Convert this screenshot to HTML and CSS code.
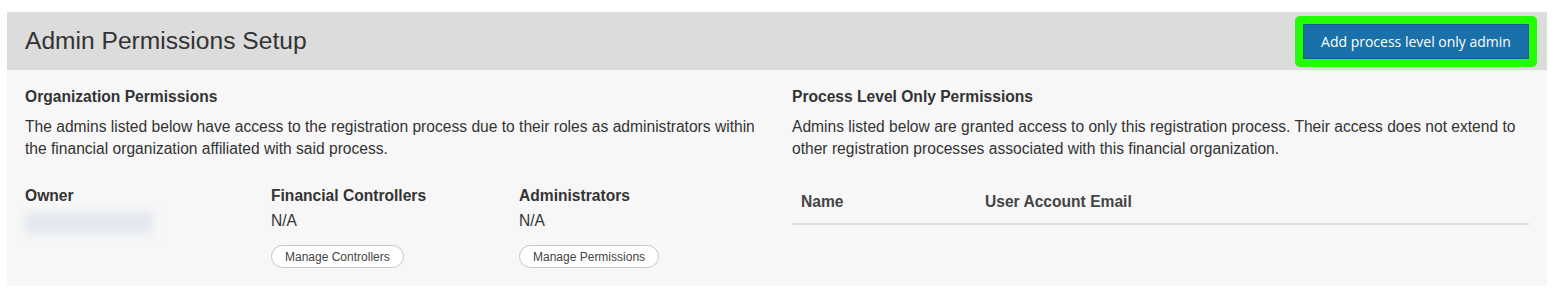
FILE: index.html
```html
<!DOCTYPE html>
<html lang="en">

<head>
    <meta charset="UTF-8">
    <title>Admin Permissions Setup</title>
    <link rel="stylesheet" href="styles.css">
</head>

<body>
    <div class="panel">
        <div class="panel-head">
            <h1>Admin Permissions Setup</h1>
            <div class="focus-ring">
                <button class="btn-primary" type="button">Add process level only admin</button>
            </div>
        </div>
        <div class="panel-body">
            <div class="section">
                <h2>Organization Permissions</h2>
                <p>The admins listed below have access to the registration process due to their roles as administrators within the financial organization affiliated with said process.</p>
                <div class="roles">
                    <div>
                        <h3>Owner</h3>
                        <div class="blurred"></div>
                    </div>
                    <div>
                        <h3>Financial Controllers</h3>
                        <div class="value">N/A</div>
                        <button class="btn-pill" type="button">Manage Controllers</button>
                    </div>
                    <div>
                        <h3>Administrators</h3>
                        <div class="value">N/A</div>
                        <button class="btn-pill" type="button">Manage Permissions</button>
                    </div>
                </div>
            </div>
            <div class="section">
                <h2>Process Level Only Permissions</h2>
                <p>Admins listed below are granted access to only this registration process. Their access does not extend to other registration processes associated with this financial organization.</p>
                <table class="admins">
                    <thead>
                        <tr>
                            <th class="col-name">Name</th>
                            <th>User Account Email</th>
                        </tr>
                    </thead>
                </table>
            </div>
        </div>
    </div>
</body>

</html>
```

FILE: styles.css
```css
* {
    box-sizing: border-box;
}

body {
    margin: 0;
    padding: 12px 7px 8px 7px;
    background-color: #fff;
    font-family: "Liberation Sans", Arial, sans-serif;
    color: #333;
}

.panel {
    background-color: #f7f7f7;
}

.panel-head {
    display: flex;
    align-items: center;
    justify-content: space-between;
    height: 58px;
    padding: 0 10px 0 18px;
    background-color: #dcdcdc;
}

h1 {
    margin: 0;
    font-size: 24.6px;
    font-weight: normal;
    color: #333;
}

.focus-ring {
    padding: 8px;
    border-radius: 5px;
    background-color: #22ff00;
}

.btn-primary {
    display: block;
    height: 35px;
    width: 226px;
    border: 1px solid #155d8c;
    background-color: #1a70a8;
    color: #fff;
    font-family: "Open Sans", sans-serif;
    font-size: 14px;
    cursor: pointer;
}

.panel-body {
    display: grid;
    grid-template-columns: 1fr 1fr;
    gap: 30px;
    padding: 16px 18px 18px 18px;
}

h2 {
    margin: 0 0 8px 0;
    font-size: 15.6px;
    line-height: 22px;
    font-weight: bold;
}

p {
    margin: 0;
    font-size: 15.6px;
    line-height: 22px;
}

.roles {
    display: grid;
    grid-template-columns: 246px 248px 1fr;
    margin-top: 24px;
}

h3 {
    margin: 0;
    font-size: 15.6px;
    line-height: 24px;
    font-weight: bold;
}

.value {
    font-size: 15.6px;
    line-height: 26px;
}

.blurred {
    width: 128px;
    height: 22px;
    margin: 4px 0 0 0;
    background-color: #e3e8f0;
    filter: blur(4px);
}

.btn-pill {
    margin-top: 11px;
    height: 23px;
    padding: 0 13px;
    border: 1px solid #c6c6c6;
    border-radius: 12px;
    background-color: #fff;
    color: #444;
    font-family: "Liberation Sans", Arial, sans-serif;
    font-size: 12px;
    cursor: pointer;
}

.admins {
    width: 100%;
    margin-top: 28px;
    border-collapse: collapse;
}

.admins th {
    padding: 5px 9px 12px 9px;
    border-bottom: 2px solid #dedede;
    text-align: left;
    font-size: 15.6px;
    color: #444;
}

.admins .col-name {
    width: 184px;
}
```
